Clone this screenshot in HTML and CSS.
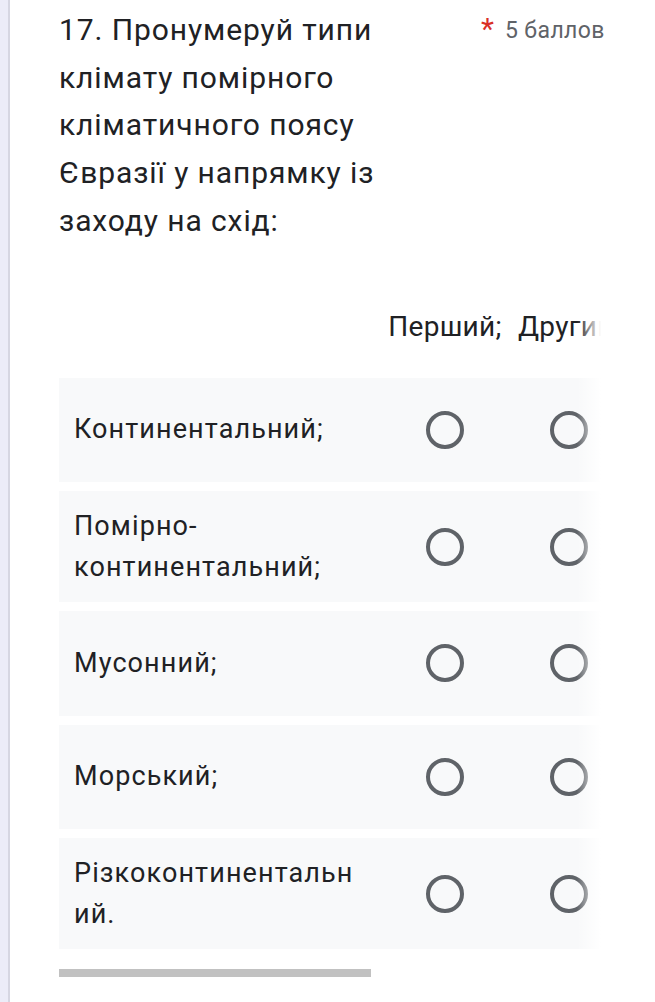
FILE: index.html
```html
<!DOCTYPE html>
<html lang="uk">
<head>
<meta charset="utf-8">
<link rel="stylesheet" href="styles.css">
</head>
<body>
<div class="page">
  <div class="rail"></div>
  <main class="question">
    <div class="q-head">
      <h2 class="q-title">17. Пронумеруй типи клімату помірного кліматичного поясу Євразії у напрямку із заходу на схід:</h2>
      <div class="q-meta"><span class="req">*</span><span class="points">5 баллов</span></div>
    </div>
    <div class="grid-wrap">
      <div class="grid">
        <div class="grid-row grid-header">
          <div class="cell-label"></div>
          <div class="cell">Перший;</div>
          <div class="cell">Другий;</div>
          <div class="cell">Третій;</div>
          <div class="cell">Четвертий;</div>
          <div class="cell">П'ятий.</div>
        </div>
        <div class="grid-row body-row">
          <div class="cell-label">Континентальний;</div>
          <div class="cell"><span class="radio"></span></div>
          <div class="cell"><span class="radio"></span></div>
          <div class="cell"><span class="radio"></span></div>
          <div class="cell"><span class="radio"></span></div>
          <div class="cell"><span class="radio"></span></div>
        </div>
        <div class="grid-row body-row">
          <div class="cell-label">Помірно-континентальний;</div>
          <div class="cell"><span class="radio"></span></div>
          <div class="cell"><span class="radio"></span></div>
          <div class="cell"><span class="radio"></span></div>
          <div class="cell"><span class="radio"></span></div>
          <div class="cell"><span class="radio"></span></div>
        </div>
        <div class="grid-row body-row">
          <div class="cell-label">Мусонний;</div>
          <div class="cell"><span class="radio"></span></div>
          <div class="cell"><span class="radio"></span></div>
          <div class="cell"><span class="radio"></span></div>
          <div class="cell"><span class="radio"></span></div>
          <div class="cell"><span class="radio"></span></div>
        </div>
        <div class="grid-row body-row">
          <div class="cell-label">Морський;</div>
          <div class="cell"><span class="radio"></span></div>
          <div class="cell"><span class="radio"></span></div>
          <div class="cell"><span class="radio"></span></div>
          <div class="cell"><span class="radio"></span></div>
          <div class="cell"><span class="radio"></span></div>
        </div>
        <div class="grid-row body-row">
          <div class="cell-label">Різкоконтинентальний.</div>
          <div class="cell"><span class="radio"></span></div>
          <div class="cell"><span class="radio"></span></div>
          <div class="cell"><span class="radio"></span></div>
          <div class="cell"><span class="radio"></span></div>
          <div class="cell"><span class="radio"></span></div>
        </div>
      </div>
      <div class="fade"></div>
    </div>
    <div class="scrollbar"><div class="thumb"></div></div>
  </main>
</div>
</body>
</html>
```

FILE: styles.css
```css
html, body {
  margin: 0;
  padding: 0;
  background: #ffffff;
}
body {
  font-family: Roboto, "Noto Sans", "Liberation Sans", sans-serif;
  color: #202124;
}
.page {
  display: flex;
  min-height: 1002px;
}
.rail {
  width: 8px;
  flex: none;
  background: #ececf8;
  border-right: 2px solid #d6d6e2;
}
.question {
  flex: 1;
  padding: 6px 0 0 49px;
}
.q-head {
  display: flex;
  align-items: flex-start;
}
.q-title {
  margin: 0;
  width: 340px;
  font-size: 30px;
  font-weight: 400;
  line-height: 47.7px;
  letter-spacing: 0.9px;
}
.q-meta {
  margin-left: 82px;
  padding-top: 7px;
  display: flex;
  align-items: baseline;
  gap: 11px;
  white-space: nowrap;
}
.req {
  color: #d93025;
  font-size: 30px;
  line-height: 30px;
  position: relative;
  top: 1px;
}
.points {
  color: #5f6368;
  font-size: 23px;
  letter-spacing: 0.4px;
}
.grid-wrap {
  position: relative;
  width: 548px;
  overflow: hidden;
  margin-top: 62px;
}
.grid {
  width: 960px;
}
.grid-row {
  display: grid;
  grid-template-columns: 324px repeat(5, 124px);
  align-items: center;
}
.grid-header {
  height: 40px;
  font-size: 28px;
  letter-spacing: 0.3px;
  line-height: 40px;
  margin-bottom: 31px;
}
.grid-header .cell {
  text-align: center;
  white-space: nowrap;
}
.body-row {
  background: #f8f9fa;
  min-height: 104.5px;
  margin-bottom: 9px;
  padding: 14.5px 0;
  box-sizing: border-box;
}
.cell-label {
  padding-left: 15px;
  padding-right: 21px;
  font-size: 27px;
  letter-spacing: 1.1px;
  line-height: 41px;
  overflow-wrap: anywhere;
}
.cell {
  display: flex;
  justify-content: center;
}
.radio {
  width: 38px;
  height: 38px;
  box-sizing: border-box;
  border: 4px solid #5f6368;
  border-radius: 50%;
}
.fade {
  position: absolute;
  top: 0;
  right: 0;
  bottom: 0;
  width: 30px;
  background: linear-gradient(to right, rgba(255,255,255,0), #ffffff 80%);
}
.scrollbar {
  width: 548px;
  height: 8px;
  margin-top: 11px;
}
.thumb {
  width: 312px;
  height: 8px;
  background: #c1c1c1;
}
```
